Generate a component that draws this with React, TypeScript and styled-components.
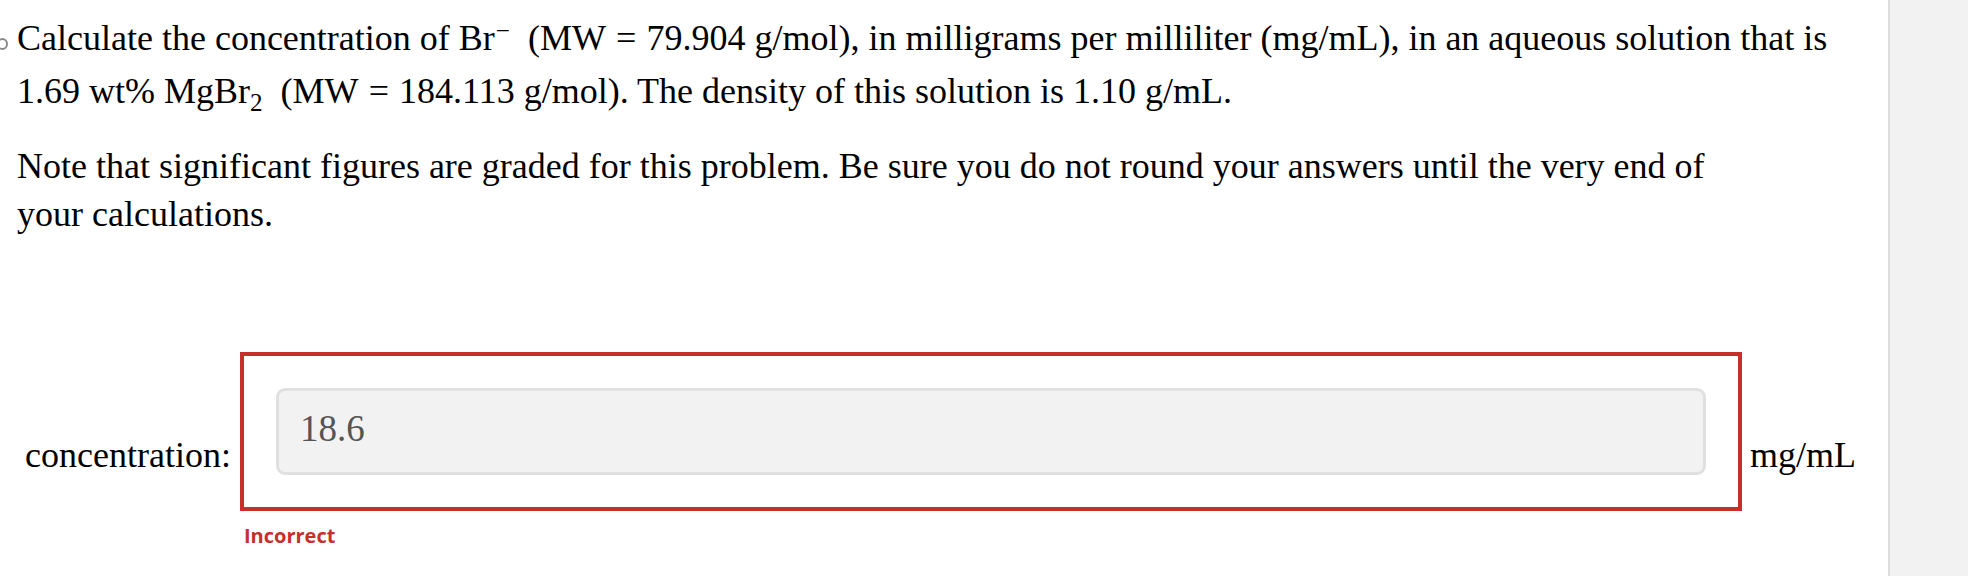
import React from 'react';
import styled, { createGlobalStyle } from 'styled-components';

const GlobalStyle = createGlobalStyle`
  html, body {
    margin: 0;
    padding: 0;
    background: #fff;
  }
  body {
    font-family: 'Liberation Serif', 'Times New Roman', serif;
    color: #000;
  }
`;

const Page = styled.div`
  display: flex;
  width: 1968px;
  height: 576px;
  overflow: hidden;
`;

const Main = styled.div`
  position: relative;
  flex: 1;
  padding: 12px 0 0 17px;
`;

const Side = styled.aside`
  width: 78px;
  background: #f2f2f2;
  border-left: 2px solid #dcdcdc;
`;

const Bullet = styled.span`
  position: absolute;
  left: -3px;
  top: 38px;
  width: 7px;
  height: 8px;
  border: 2px solid #8a8a8a;
  border-radius: 50%;
`;

const Para = styled.p<{ lh: number; gap?: number }>`
  margin: 0 0 ${({ gap }) => gap ?? 0}px;
  font-size: 36px;
  line-height: ${({ lh }) => lh}px;
  white-space: nowrap;
`;

const Sup = styled.sup`
  font-size: 0.7em;
  vertical-align: 0.45em;
  line-height: 0;
  margin-left: 1px;
`;

const Sub = styled.sub`
  font-size: 0.7em;
  vertical-align: -0.3em;
  line-height: 0;
`;

const Op = styled.span`
  margin: 0 0.28em;
`;

const AnswerRow = styled.div`
  display: flex;
  align-items: flex-start;
  margin-top: 114px;
  margin-left: 8px;
`;

const Label = styled.span<{ side: 'left' | 'right' }>`
  font-size: 36px;
  line-height: 40px;
  margin-top: 83px;
  ${({ side }) => (side === 'left' ? 'width: 215px;' : 'margin-left: 8px;')}
`;

const Field = styled.div`
  display: flex;
  flex-direction: column;
`;

const ErrorBox = styled.div`
  width: 1502px;
  box-sizing: border-box;
  border: 4px solid #c4302b;
  padding: 32px;
`;

const Input = styled.div`
  box-sizing: border-box;
  height: 87px;
  border: 3px solid #e0e0e0;
  border-radius: 9px;
  background: #f2f2f2;
  padding: 16px 21px 0;
  font-size: 37px;
  line-height: 44px;
  color: #555;
`;

const Feedback = styled.div`
  margin: 11px 0 0 4px;
  font-family: 'Open Sans', 'Liberation Sans', sans-serif;
  font-weight: 700;
  font-size: 20px;
  line-height: 28px;
  color: #c4302b;
`;

export default function App() {
  return (
    <>
      <GlobalStyle />
      <Page>
        <Main>
          <Bullet />
          <Para lh={53} gap={24}>
            Calculate the concentration of Br<Sup>−</Sup>&nbsp; (MW<Op>=</Op>79.904 g/mol), in milligrams per
            milliliter (mg/mL), in an aqueous solution that is
            <br />
            1.69 wt% MgBr<Sub>2</Sub>&nbsp; (MW<Op>=</Op>184.113 g/mol). The density of this solution is 1.10 g/mL.
          </Para>
          <Para lh={48}>
            Note that significant figures are graded for this problem. Be sure you do not round your answers until
            the very end of
            <br />
            your calculations.
          </Para>
          <AnswerRow>
            <Label side="left">concentration:</Label>
            <Field>
              <ErrorBox>
                <Input>18.6</Input>
              </ErrorBox>
              <Feedback>Incorrect</Feedback>
            </Field>
            <Label side="right">mg/mL</Label>
          </AnswerRow>
        </Main>
        <Side />
      </Page>
    </>
  );
}
